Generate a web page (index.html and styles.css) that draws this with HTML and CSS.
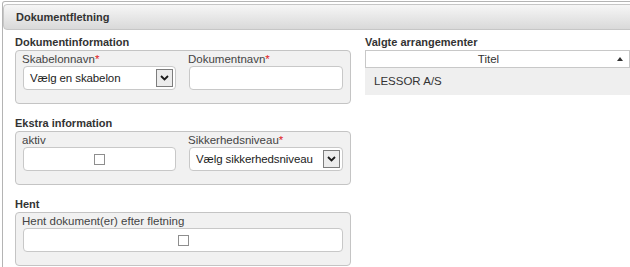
FILE: index.html
```html
<!DOCTYPE html>
<html lang="da">
<head>
    <meta charset="UTF-8">
    <title>Dokumentfletning</title>
    <link rel="stylesheet" href="styles.css">
</head>
<body>
<div class="panel">
    <div class="panel-header">Dokumentfletning</div>

    <div class="panel-body">
        <!-- Venstre kolonne: formular -->
        <div class="form-col">
            <div class="group">
                <div class="group-title">Dokumentinformation</div>
                <div class="group-box">
                    <div class="field">
                        <div class="field-label">Skabelonnavn<span class="req">*</span></div>
                        <div class="select">
                            <span class="select-text">Vælg en skabelon</span>
                            <span class="select-arrow"><svg width="9" height="6" viewBox="0 0 9 6"><polyline points="1,1 4.5,4.5 8,1" fill="none" stroke="#1a1a1a" stroke-width="1.8"/></svg></span>
                        </div>
                    </div>
                    <div class="field">
                        <div class="field-label">Dokumentnavn<span class="req">*</span></div>
                        <div class="input"></div>
                    </div>
                </div>
            </div>

            <div class="group">
                <div class="group-title">Ekstra information</div>
                <div class="group-box">
                    <div class="field">
                        <div class="field-label">aktiv</div>
                        <div class="input input-check"><span class="checkbox"></span></div>
                    </div>
                    <div class="field">
                        <div class="field-label">Sikkerhedsniveau<span class="req">*</span></div>
                        <div class="select">
                            <span class="select-text">Vælg sikkerhedsniveau</span>
                            <span class="select-arrow"><svg width="9" height="6" viewBox="0 0 9 6"><polyline points="1,1 4.5,4.5 8,1" fill="none" stroke="#1a1a1a" stroke-width="1.8"/></svg></span>
                        </div>
                    </div>
                </div>
            </div>

            <div class="group">
                <div class="group-title">Hent</div>
                <div class="group-box">
                    <div class="field field-wide">
                        <div class="field-label">Hent dokument(er) efter fletning</div>
                        <div class="input input-check"><span class="checkbox"></span></div>
                    </div>
                </div>
            </div>
        </div>

        <!-- Højre kolonne: valgte arrangementer -->
        <div class="list-col">
            <div class="group-title">Valgte arrangementer</div>
            <div class="grid">
                <div class="grid-head">
                    <span class="grid-head-title">Titel</span>
                    <span class="sort-up"></span>
                </div>
                <div class="grid-row">LESSOR A/S</div>
            </div>
        </div>
    </div>
</div>
</body>
</html>
```

FILE: styles.css
```css
body {
    margin: 0;
    overflow: hidden;
    background: #fff;
    font-family: "Liberation Sans", Arial, sans-serif;
    font-size: 11.5px;
    color: #333;
}

.panel {
    box-sizing: border-box;
    margin: 1px 0 0 2px;
    width: 640px;
    height: 266px;
    border: 1px solid #b4b4b4;
    border-bottom: none;
    border-radius: 3px 0 0 0;
}

.panel-header {
    margin-top: 2px;
    height: 24px;
    line-height: 24px;
    padding-left: 12px;
    border: 1px solid #c6c6c6;
    border-radius: 4px;
    background: linear-gradient(#f6f6f6, #d9d9d9);
    font-weight: bold;
    font-size: 11px;
    color: #333;
}

.panel-body {
    display: flex;
    gap: 14px;
    padding: 5px 0 0 12px;
}

/* Formular */
.form-col {
    width: 336px;
    display: flex;
    flex-direction: column;
    gap: 12px;
}

.group-title {
    height: 15px;
    line-height: 15px;
    font-weight: bold;
    font-size: 11px;
    color: #333;
}

.group-box {
    box-sizing: border-box;
    height: 54px;
    padding: 1px 7px 0 7px;
    display: flex;
    gap: 13px;
    background: #f1f1f1;
    border: 1px solid #c4c4c4;
    border-radius: 4px;
}

.field {
    width: 153px;
}

.field + .field {
    width: 154px;
}

.field-wide {
    width: 320px;
}

.field-label {
    height: 14px;
    line-height: 14px;
    margin-left: -1px;
    color: #444;
}

.req {
    color: #e0201c;
}

.input,
.select {
    box-sizing: border-box;
    height: 24px;
    background: #fff;
    border: 1px solid #c8c8c8;
    border-radius: 4px;
}

.select {
    display: flex;
    align-items: center;
    justify-content: space-between;
    padding: 0 2px 0 6px;
}

.select-text {
    font-size: 11.5px;
    letter-spacing: -0.1px;
    color: #222;
    white-space: nowrap;
}

.select-arrow {
    box-sizing: border-box;
    flex: none;
    width: 17px;
    height: 18px;
    margin-left: 2px;
    border: 1px solid #7d7d7d;
    background: #ececec;
    display: flex;
    align-items: center;
    justify-content: center;
}

.input-check {
    display: flex;
    align-items: center;
    justify-content: center;
}

.checkbox {
    box-sizing: border-box;
    width: 11px;
    height: 11px;
    border: 1px solid #8e8e8e;
    background: #fff;
}

/* Liste */
.list-col {
    width: 265px;
}

.grid-head {
    box-sizing: border-box;
    height: 18px;
    display: flex;
    align-items: center;
    background: #fff;
    border: 1px solid #c8c8c8;
}

.grid-head-title {
    flex: 1;
    text-align: center;
    padding-left: 4px;
    color: #333;
}

.sort-up {
    width: 0;
    height: 0;
    margin: 0 6px 1px 10px;
    border-left: 3.5px solid transparent;
    border-right: 3.5px solid transparent;
    border-bottom: 4px solid #333;
}

.grid-row {
    height: 27px;
    line-height: 27px;
    padding-left: 9px;
    background: #efefef;
    color: #333;
}
```
